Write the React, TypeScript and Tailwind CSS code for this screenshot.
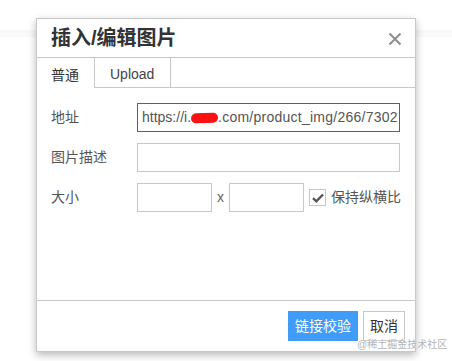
import React from "react";

const font = { fontFamily: '"Liberation Sans", "Noto Sans CJK SC", Arial, sans-serif' };

export default function App() {
  return (
    <div className="relative w-[452px] h-[361px] bg-white overflow-hidden" style={font}>
      <div className="absolute left-0 right-0 top-[30px] h-[7px] bg-[#f9f9f9]" />
      <div className="relative pl-[36px] pt-[18px]">
        <div className="w-[380px] h-[334px] bg-white border border-[#c8c8c8] shadow-[0_3px_8px_rgba(0,0,0,0.28)] flex flex-col">
          {/* Header */}
          <div className="h-[39px] border-b border-[#c8c8c8] flex items-center justify-between pl-[14px] pr-[13px]">
            <span className="text-[20px] font-bold text-[#333] leading-none">插入/编辑图片</span>
            <svg width="14" height="14" viewBox="0 0 14 14" className="mt-[1px]">
              <path d="M1.5 1.5 L12.5 12.5 M12.5 1.5 L1.5 12.5" stroke="#8c8c8c" strokeWidth="2" />
            </svg>
          </div>
          {/* Tabs */}
          <div className="flex h-[30px]">
            <div className="w-[58px] h-[30px] border-r border-[#c8c8c8] bg-white pl-[14px] pt-[7px] text-[14px] leading-[20px] text-[#333]">
              普通
            </div>
            <div className="w-[76px] h-[30px] border-r border-b border-[#c8c8c8] pl-[15px] pt-[6px] text-[14px] leading-[20px] text-[#444]">
              Upload
            </div>
            <div className="flex-1 h-[30px] border-b border-[#c8c8c8]" />
          </div>
          {/* Body */}
          <div className="flex-1 pl-[14px] pt-[15px] flex flex-col gap-[11px]">
            <div className="flex items-center h-[29px]">
              <span className="w-[86px] text-[14px] text-[#555]">地址</span>
              <div className="w-[263px] h-[29px] border border-[#336e8c] pl-[4px] flex items-center overflow-hidden whitespace-nowrap text-[14px] text-[#555]">
                <span>https://i.</span>
                <span className="inline-block shrink-0 w-[27px] h-[10px] bg-[#ff1010] rounded-full -rotate-2" />
                <span className="tracking-[0.25px]">.com/product_img/266/7302</span>
              </div>
            </div>
            <div className="flex items-center h-[29px]">
              <span className="w-[86px] text-[14px] text-[#555]">图片描述</span>
              <div className="w-[263px] h-[29px] border border-[#c8c8c8]" />
            </div>
            <div className="flex items-center h-[29px]">
              <span className="w-[86px] text-[14px] text-[#555]">大小</span>
              <div className="w-[75px] h-[29px] border border-[#c8c8c8]" />
              <span className="w-[17px] text-center text-[14px] text-[#666] mb-[1px]">x</span>
              <div className="w-[75px] h-[29px] border border-[#c8c8c8]" />
              <div className="ml-[5px] w-[17px] h-[17px] border border-[#c8c8c8] flex items-center justify-center">
                <svg width="12" height="10" viewBox="0 0 12 10">
                  <path d="M1 5.2 L4.3 8.3 L11 1.5" stroke="#555" strokeWidth="2.4" fill="none" />
                </svg>
              </div>
              <span className="ml-[5px] text-[14px] text-[#555] whitespace-nowrap">保持纵横比</span>
            </div>
          </div>
          {/* Footer */}
          <div className="h-[51px] border-t border-[#c8c8c8] flex justify-end items-start pt-[10px] pr-[10px] gap-[5px]">
            <div className="w-[70px] h-[30px] bg-[#419bf9] text-white text-[14px] flex items-center justify-center">
              链接校验
            </div>
            <div className="w-[42px] h-[30px] border border-[#c8c8c8] bg-white text-[#333] text-[14px] flex items-center justify-center">
              取消
            </div>
          </div>
        </div>
      </div>
      <div className="absolute left-[357px] top-[339px] text-[10px] leading-[12px] text-[#b4b4b4] whitespace-nowrap [text-shadow:0_0_2px_#fff]">
        @稀土掘金技术社区
      </div>
    </div>
  );
}
